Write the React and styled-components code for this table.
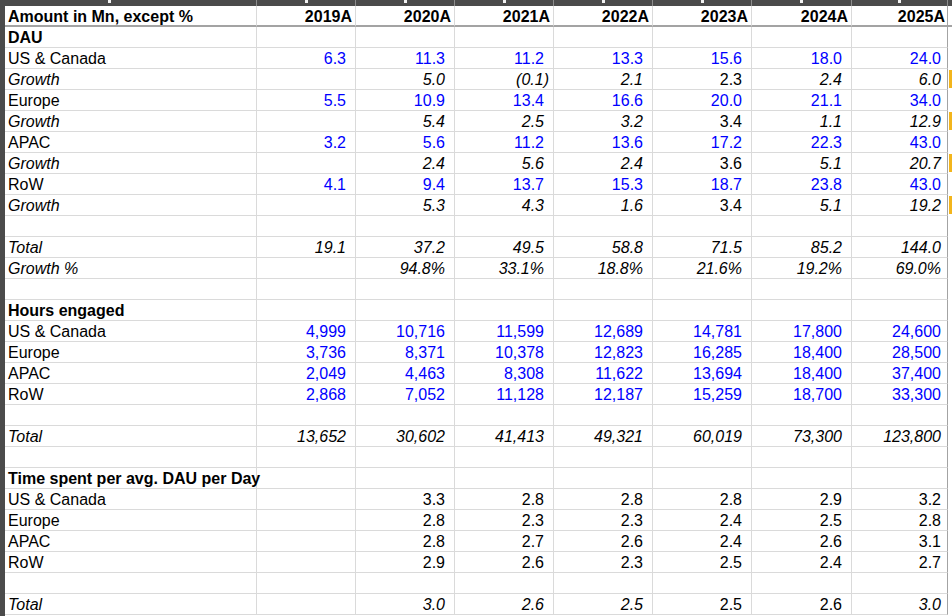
import React from 'react';
import styled, { createGlobalStyle } from 'styled-components';

const GlobalStyle = createGlobalStyle`
  html, body {
    margin: 0;
    padding: 0;
    background: #ffffff;
  }
  body {
    font-family: "Liberation Sans", Arial, sans-serif;
    font-size: 16px;
    color: #000000;
  }
`;

const COLUMNS = '252px repeat(5, 99px) 100px 96px 4px';

const Sheet = styled.div`
  width: 952px;
  height: 616px;
  overflow: hidden;
  box-sizing: border-box;
  border-left: 5px solid #4b4b4b;
`;

const TopStrip = styled.div`
  display: grid;
  grid-template-columns: ${COLUMNS};
  height: 6px;
  background: #4b4b4b;
`;

const StripCell = styled.div`
  display: flex;
  justify-content: ${(p) => (p.$label ? 'flex-start' : 'center')};
  padding-left: ${(p) => (p.$label ? '103px' : '0')};
  border-right: 1px solid #8c8c8c;
  box-sizing: border-box;
`;

const StripMark = styled.span`
  width: 3px;
  height: 3px;
  background: #f2f2f2;
`;

const Row = styled.div`
  display: grid;
  grid-template-columns: ${COLUMNS};
  height: 21px;
`;

const Cell = styled.div`
  box-sizing: border-box;
  height: 100%;
  display: flex;
  align-items: center;
  justify-content: ${(p) => (p.$label ? 'flex-start' : 'flex-end')};
  padding: ${(p) => (p.$label ? '2px 0 0 3px' : `2px ${p.$pad}px 0 0`)};
  border-right: 1px solid ${(p) => (p.$last ? '#a3a3a3' : '#dadada')};
  border-bottom: ${(p) => (p.$head ? '2px solid #a3a3a3' : '1px solid #dadada')};
  font-weight: ${(p) => (p.$bold ? 700 : 400)};
  font-style: ${(p) => (p.$italic ? 'italic' : 'normal')};
  color: ${(p) => (p.$blue ? '#0000ff' : '#000000')};
  white-space: nowrap;
  line-height: 1;
`;

const Marker = styled.div`
  box-sizing: border-box;
  height: 100%;
  padding: 1px 0 2px 1px;
  border-bottom: ${(p) => (p.$head ? '2px solid #a3a3a3' : 'none')};

  &::after {
    content: '';
    display: ${(p) => (p.$on ? 'block' : 'none')};
    height: 100%;
    background: #f3b51c;
  }
`;

const YEARS = ['2019A', '2020A', '2021A', '2022A', '2023A', '2024A', '2025A'];

const blank = { kind: 'blank' };

const ROWS = [
  { kind: 'section', label: 'DAU' },
  { kind: 'input', label: 'US & Canada', values: ['6.3', '11.3', '11.2', '13.3', '15.6', '18.0', '24.0'] },
  { kind: 'growth', label: 'Growth', values: ['', '5.0', '(0.1)', '2.1', '2.3', '2.4', '6.0'], plain: [4] },
  { kind: 'input', label: 'Europe', values: ['5.5', '10.9', '13.4', '16.6', '20.0', '21.1', '34.0'] },
  { kind: 'growth', label: 'Growth', values: ['', '5.4', '2.5', '3.2', '3.4', '1.1', '12.9'], plain: [4] },
  { kind: 'input', label: 'APAC', values: ['3.2', '5.6', '11.2', '13.6', '17.2', '22.3', '43.0'] },
  { kind: 'growth', label: 'Growth', values: ['', '2.4', '5.6', '2.4', '3.6', '5.1', '20.7'], plain: [4] },
  { kind: 'input', label: 'RoW', values: ['4.1', '9.4', '13.7', '15.3', '18.7', '23.8', '43.0'] },
  { kind: 'growth', label: 'Growth', values: ['', '5.3', '4.3', '1.6', '3.4', '5.1', '19.2'], plain: [4] },
  blank,
  { kind: 'total', label: 'Total', values: ['19.1', '37.2', '49.5', '58.8', '71.5', '85.2', '144.0'] },
  { kind: 'total', label: 'Growth %', values: ['', '94.8%', '33.1%', '18.8%', '21.6%', '19.2%', '69.0%'] },
  blank,
  { kind: 'section', label: 'Hours engaged' },
  { kind: 'input', label: 'US & Canada', values: ['4,999', '10,716', '11,599', '12,689', '14,781', '17,800', '24,600'] },
  { kind: 'input', label: 'Europe', values: ['3,736', '8,371', '10,378', '12,823', '16,285', '18,400', '28,500'] },
  { kind: 'input', label: 'APAC', values: ['2,049', '4,463', '8,308', '11,622', '13,694', '18,400', '37,400'] },
  { kind: 'input', label: 'RoW', values: ['2,868', '7,052', '11,128', '12,187', '15,259', '18,700', '33,300'] },
  blank,
  { kind: 'total', label: 'Total', values: ['13,652', '30,602', '41,413', '49,321', '60,019', '73,300', '123,800'] },
  blank,
  { kind: 'section', label: 'Time spent per avg. DAU per Day' },
  { kind: 'calc', label: 'US & Canada', values: ['', '3.3', '2.8', '2.8', '2.8', '2.9', '3.2'] },
  { kind: 'calc', label: 'Europe', values: ['', '2.8', '2.3', '2.3', '2.4', '2.5', '2.8'] },
  { kind: 'calc', label: 'APAC', values: ['', '2.8', '2.7', '2.6', '2.4', '2.6', '3.1'] },
  { kind: 'calc', label: 'RoW', values: ['', '2.9', '2.6', '2.3', '2.5', '2.4', '2.7'] },
  blank,
  { kind: 'total', label: 'Total', values: ['', '3.0', '2.6', '2.5', '2.5', '2.6', '3.0'], plain: [4, 5] },
];

const isItalicRow = (kind) => kind === 'growth' || kind === 'total';

const numberPad = (col, value) => {
  const base = col === YEARS.length - 1 ? 6 : 9;
  return value.startsWith('(') ? base - 5 : base;
};

const HeaderRow = () => (
  <Row>
    <Cell $label $bold $head>Amount in Mn, except %</Cell>
    {YEARS.map((year, i) => (
      <Cell key={year} $bold $head $pad={i === YEARS.length - 1 ? 2 : 3} $last={i === YEARS.length - 1}>
        {year}
      </Cell>
    ))}
    <Marker $head />
  </Row>
);

const DataRow = ({ row }) => {
  const values = row.values || YEARS.map(() => '');
  const plain = row.plain || [];
  return (
    <Row>
      <Cell $label $bold={row.kind === 'section'} $italic={isItalicRow(row.kind)}>
        {row.label || ''}
      </Cell>
      {values.map((value, i) => (
        <Cell
          key={i}
          $pad={numberPad(i, value)}
          $blue={row.kind === 'input'}
          $italic={isItalicRow(row.kind) && !plain.includes(i)}
          $last={i === YEARS.length - 1}
        >
          {value}
        </Cell>
      ))}
      <Marker $on={row.kind === 'growth'} />
    </Row>
  );
};

export default function App() {
  return (
    <>
      <GlobalStyle />
      <Sheet>
        <TopStrip>
          <StripCell $label><StripMark /></StripCell>
          {YEARS.map((year) => (
            <StripCell key={year}><StripMark /></StripCell>
          ))}
          <div />
        </TopStrip>
        <HeaderRow />
        {ROWS.map((row, i) => (
          <DataRow key={i} row={row} />
        ))}
      </Sheet>
    </>
  );
}
